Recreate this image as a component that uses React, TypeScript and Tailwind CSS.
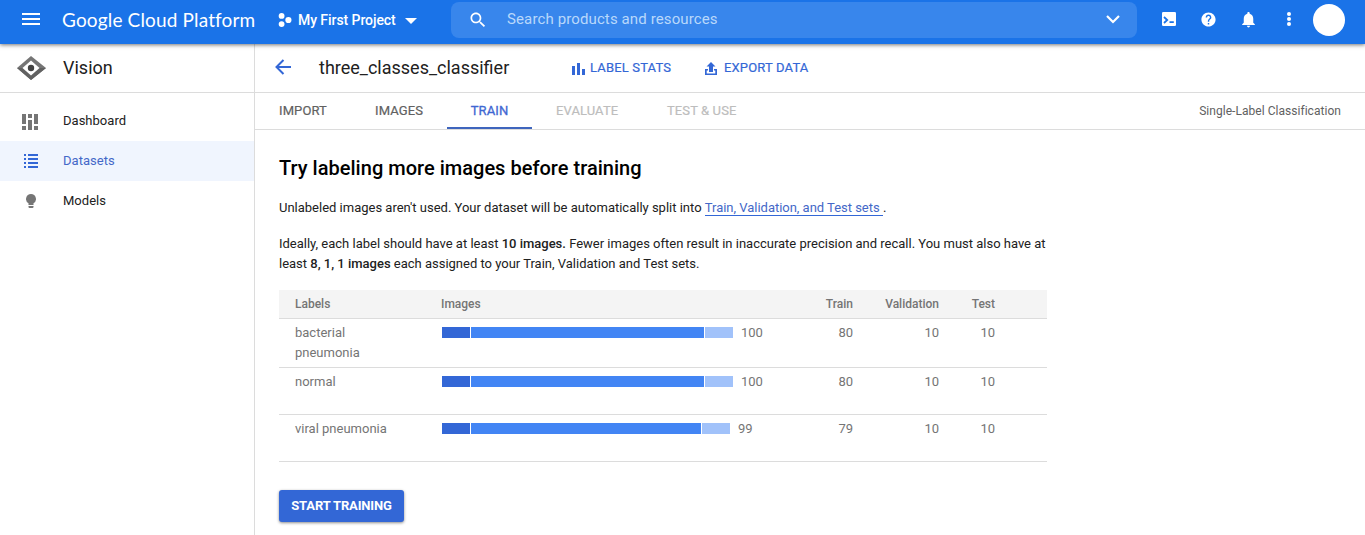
import type { ReactNode } from "react";

type Row = { lines: string[]; test: number; train: number; validation: number; trainPx: number; height: string };

const rows: Row[] = [
  { lines: ["bacterial", "pneumonia"], train: 80, validation: 10, test: 10, trainPx: 233, height: "h-[49px]" },
  { lines: ["normal"], train: 80, validation: 10, test: 10, trainPx: 233, height: "h-[47px]" },
  { lines: ["viral pneumonia"], train: 79, validation: 10, test: 10, trainPx: 230, height: "h-[47px]" },
];

function Icon({ d, className, box = "0 0 24 24" }: { d: string; className: string; box?: string }) {
  return (
    <svg viewBox={box} fill="currentColor" className={`shrink-0 ${className}`}>
      <path d={d} fillRule="evenodd" />
    </svg>
  );
}

function TopBar() {
  return (
    <header className="relative z-10 flex h-11 shrink-0 items-start bg-[#1a73e8] text-white shadow-[0_1px_4px_rgba(0,0,0,0.55)]">
      <Icon className="mt-[7px] ml-[19px] size-6" d="M3 18h18v-2H3v2zm0-5h18v-2H3v2zm0-7v2h18V6H3z" />
      <div className="mt-[8px] ml-[19px] w-[194px] font-[Lato,sans-serif] text-[19px] leading-6 tracking-[0.15px] whitespace-nowrap">
        Google Cloud Platform
      </div>
      <svg viewBox="0 0 14 14" fill="currentColor" className="mt-[13px] ml-[22px] size-[14px] shrink-0">
        <circle cx="3.6" cy="2.9" r="2.9" />
        <circle cx="3.6" cy="11.1" r="2.9" />
        <circle cx="10.4" cy="7" r="3.1" />
      </svg>
      <div className="mt-[10px] ml-[6px] w-[107px] text-[14px] leading-5 font-medium tracking-[-0.07px] whitespace-nowrap">
        My First Project
      </div>
      <Icon className="mt-[18px] h-[6px] w-3" box="0 0 12 6" d="M0 0h12L6 6z" />
      <div className="mt-[2px] ml-[34px] flex h-9 w-[686px] shrink-0 items-start rounded-lg bg-[#3886ec]">
        <Icon
          className="mt-[8px] ml-[17px] size-5"
          d="M15.5 14h-.79l-.28-.27C15.41 12.59 16 11.11 16 9.5 16 5.91 13.09 3 9.5 3S3 5.91 3 9.5 5.91 16 9.5 16c1.61 0 3.09-.59 4.23-1.57l.27.28v.79l5 4.99L20.49 19l-4.99-5zm-6 0C7.01 14 5 11.99 5 9.5S7.01 5 9.5 5 14 7.01 14 9.5 11.99 14 9.5 14z"
        />
        <span className="mt-[7px] ml-[19px] grow text-[15px] leading-5 tracking-[0.12px] text-[#b9d8fb]">
          Search products and resources
        </span>
        <svg viewBox="0 0 14 9" fill="none" stroke="currentColor" strokeWidth="2.2" className="mt-[13px] mr-[17px] h-[9px] w-[14px]">
          <path d="M1 1l6 6 6-6" />
        </svg>
      </div>
      <svg viewBox="0 0 14 14" className="mt-3 ml-[25px] size-[14px] shrink-0">
        <rect width="14" height="14" rx="1.3" fill="white" />
        <path d="M2 5l3.2 3L2 11M7.5 10.2h4.3" fill="none" stroke="#1a73e8" strokeWidth="1.8" />
      </svg>
      <Icon
        className="mt-[11px] ml-[24px] size-[17px]"
        d="M12 2C6.48 2 2 6.48 2 12s4.48 10 10 10 10-4.48 10-10S17.52 2 12 2zm1 17h-2v-2h2v2zm2.07-7.75l-.9.92C13.45 12.9 13 13.5 13 15h-2v-.5c0-1.1.45-2.1 1.17-2.83l1.24-1.26c.37-.36.59-.86.59-1.41 0-1.1-.9-2-2-2s-2 .9-2 2H8c0-2.21 1.790-4 4-4s4 1.790 4 4c0 .88-.36 1.68-.93 2.25z"
      />
      <Icon
        className="mt-[10px] ml-[22px] size-[19px]"
        d="M12 22c1.1 0 2-.9 2-2h-4c0 1.1.89 2 2 2zm6-6v-5c0-3.07-1.64-5.64-4.5-6.32V4c0-.83-.67-1.5-1.5-1.5s-1.5.67-1.5 1.5v.68C7.63 5.36 6 7.92 6 11v5l-2 2v1h16v-1l-2-2z"
      />
      <svg viewBox="0 0 4 14" fill="currentColor" className="mt-3 ml-[29px] h-[14px] w-1 shrink-0">
        <circle cx="2" cy="2" r="2" />
        <circle cx="2" cy="7" r="2" />
        <circle cx="2" cy="12" r="2" />
      </svg>
      <div className="mt-1 ml-[22px] size-8 shrink-0 rounded-full bg-white" />
    </header>
  );
}

function NavItem({ icon, label, active = false }: { icon: ReactNode; label: string; active?: boolean }) {
  return (
    <div className={`flex h-10 items-center ${active ? "bg-[#f0f5fe] text-[#3367d6]" : "text-[#757575]"}`}>
      <div className="flex w-[63px] items-center justify-center pr-[2px]">{icon}</div>
      <span className={`text-[13px] tracking-[0.02px] ${active ? "text-[#4468c8]" : "text-[#212121]"}`}>{label}</span>
    </div>
  );
}

function Sidebar() {
  return (
    <aside className="w-[255px] shrink-0 border-r border-[#dcdcdc]">
      <div className="flex h-[49px] items-center border-b border-[#dcdcdc]">
        <svg viewBox="0 0 29 24" className="ml-[17px] h-6 w-[29px]">
          <path d="M14 0L29 12 14 24 0 12z" fill="#757575" />
          <path d="M0 12h29L14 24z" fill="#616161" />
          <path d="M14 4.500L22.500 12 14 19.500 5.500 12z" fill="white" />
          <circle cx="14" cy="12" r="3.200" fill="#424242" />
        </svg>
        <span className="mb-[2px] ml-[17px] text-[18px] text-[#212121]">Vision</span>
      </div>
      <nav className="pt-2">
        <NavItem
          label="Dashboard"
          icon={<Icon className="mt-px h-4 w-[17px]" box="0 0 17 16" d="M0 0h4v10H0zM6 0h4v4H6zM12 0h4v10h-4zM0 12h4v4H0zM6 6h4v10H6zM12 12h4v4h-4z" />}
        />
        <NavItem
          active
          label="Datasets"
          icon={<Icon className="h-[14px] w-[14px]" box="0 0 14 14" d="M0 0h2v2H0zM4 0h10v2H4zM0 4h2v2H0zM4 4h10v2H4zM0 8h2v2H0zM4 8h10v2H4zM0 12h2v2H0zM4 12h10v2H4z" />}
        />
        <NavItem
          label="Models"
          icon={<Icon className="h-[14px] w-[10px]" box="0 0 10 14" d="M5 0a5 5 0 0 1 2.500 9.300V11h-5V9.300A5 5 0 0 1 5 0zM2.500 12h5v1a1 1 0 0 1-1 1h-3a1 1 0 0 1-1-1z" />}
        />
      </nav>
    </aside>
  );
}

function DatasetHeader() {
  return (
    <div className="flex h-[49px] items-center border-b border-[#dcdcdc] text-[#3367d6]">
      <svg viewBox="0 0 16 16" fill="none" stroke="currentColor" strokeWidth="2" className="mb-[2px] ml-5 size-4">
        <path d="M16 8H1.500M8.500 1L1.500 8l7 7" />
      </svg>
      <span className="mb-[2px] ml-[28px] w-[253px] text-[18px] text-[#212121]">three_classes_classifier</span>
      <Icon className="mt-[2px] h-3 w-[13px]" box="0 0 13 12" d="M0 3h3v9H0zM5 0h3v12H5zM10 6h3v6h-3z" />
      <span className="ml-[5px] w-[115px] text-[13px] tracking-[0.16px] [-webkit-text-stroke:0.2px]">LABEL STATS</span>
      <Icon className="h-[13px] w-3" box="0 0 12 13" d="M6 0l4.500 4.500H8V10H4V4.500H1.500zM0 7h3v1.500H1.700v3h8.600v-3H9V7h3v6H0z" />
      <span className="ml-[7px] text-[13px] tracking-[0.16px] [-webkit-text-stroke:0.2px]">EXPORT DATA</span>
    </div>
  );
}

function Tabs() {
  return (
    <div className="flex h-[37px] border-b border-[#dcdcdc] text-[13px] leading-[36px] tracking-[0.1px] whitespace-nowrap text-[#616161]">
      <span className="w-[96px] pl-6 [-webkit-text-stroke:0.2px]">IMPORT</span>
      <span className="w-[96px] pl-6 [-webkit-text-stroke:0.2px]">IMAGES</span>
      <span className="h-9 w-[85px] border-b-2 border-[#3f65bd] text-center text-[#3f67d2] [-webkit-text-stroke:0.3px]">TRAIN</span>
      <span className="w-[111px] pl-6 text-[#bdbdbd] [-webkit-text-stroke:0.2px]">EVALUATE</span>
      <span className="pl-6 text-[#bdbdbd] [-webkit-text-stroke:0.2px]">TEST &amp; USE</span>
      <span className="mr-6 ml-auto text-[12px] tracking-[0.04px]">Single-Label Classification</span>
    </div>
  );
}

const columns = "grid grid-cols-[162px_348px_64px_86px_56px_52px]";

function LabelsTable() {
  return (
    <div className="w-[768px] text-[#757575]">
      <div className={`${columns} h-[29px] border-b border-[#dcdcdc] bg-[#f4f4f4] text-[12px] leading-7 font-medium`}>
        <span className="pl-4">Labels</span>
        <span>Images</span>
        <span className="text-right">Train</span>
        <span className="text-right">Validation</span>
        <span className="text-right">Test</span>
      </div>
      {rows.map((row) => (
        <div key={row.lines[0]} className={`${columns} ${row.height} border-b border-[#dcdcdc] pt-1 text-[13px] leading-5`}>
          <span className="flex flex-col pl-4">
            {row.lines.map((line) => (
              <span key={line}>{line}</span>
            ))}
          </span>
          <span className="flex items-start pl-px">
            <span className="mt-1 flex gap-px">
              <span className="h-[11px] w-7 bg-[#3367d6]" />
              <span className="h-[11px] bg-[#4285f4]" style={{ width: row.trainPx }} />
              <span className="h-[11px] w-7 bg-[#a1c2fa]" />
            </span>
            <span className="ml-2">{row.train + row.validation + row.test}</span>
          </span>
          <span className="text-right">{row.train}</span>
          <span className="text-right">{row.validation}</span>
          <span className="text-right">{row.test}</span>
        </div>
      ))}
    </div>
  );
}

function TrainPanel() {
  return (
    <section className="pt-[26px] pl-6 text-[#212121]">
      <h1 className="text-[20px] leading-6 font-medium tracking-[0.02px] text-black">
        Try labeling more images before training
      </h1>
      <p className="mt-[18px] text-[13px] leading-5 tracking-[-0.005px]">
        Unlabeled images aren't used. Your dataset will be automatically split into{" "}
        <a className="border-b border-[#3367d6] tracking-[-0.02px] text-[#4468c8]">Train, Validation, and Test sets </a>.
      </p>
      <p className="mt-4 text-[13px] leading-5 tracking-[-0.005px] whitespace-nowrap">
        Ideally, each label should have at least <b className="font-medium">10 images.</b> Fewer images often result in
        inaccurate precision and recall. You must also have at
        <br />
        least <b className="font-medium">8, 1, 1 images</b> each assigned to your Train, Validation and Test sets.
      </p>
      <div className="mt-4">
        <LabelsTable />
      </div>
      <button className="mt-7 h-8 w-[125px] rounded-[3px] bg-[#3367d6] text-[13px] font-bold tracking-[-0.15px] text-white shadow-[0_1px_3px_rgba(0,0,0,0.45)]">
        START TRAINING
      </button>
    </section>
  );
}

export default function App() {
  return (
    <div className="flex h-[535px] w-[1365px] flex-col overflow-hidden bg-white font-[Roboto,sans-serif]">
      <TopBar />
      <div className="flex grow">
        <Sidebar />
        <main className="grow">
          <DatasetHeader />
          <Tabs />
          <TrainPanel />
        </main>
      </div>
    </div>
  );
}
